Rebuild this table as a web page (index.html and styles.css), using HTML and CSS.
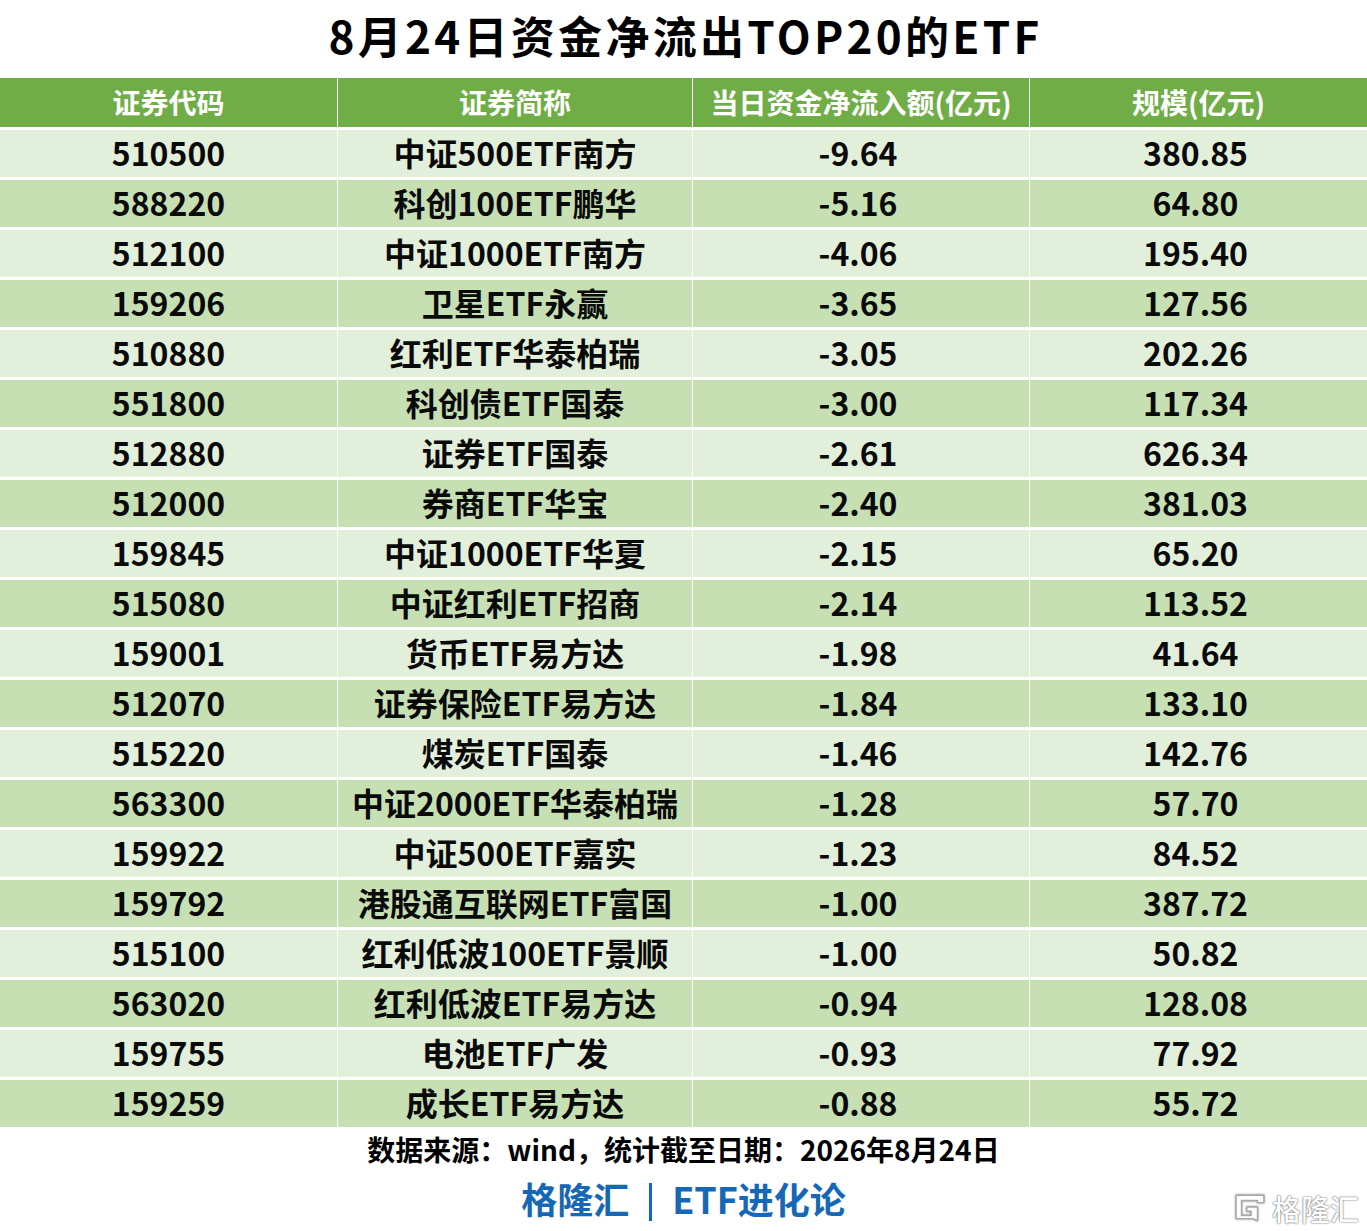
FILE: index.html
```html
<!DOCTYPE html>
<html lang="zh-CN">
<head>
<meta charset="utf-8">
<title>8月24日资金净流出TOP20的ETF</title>
<link rel="stylesheet" href="styles.css">
</head>
<body>
<div class="page">
  <header class="title-bar"><h1 class="title">8月24日资金净流出TOP20的ETF</h1></header>
  <div class="table">
    <div class="th">证券代码</div><div class="th">证券简称</div><div class="th">当日资金净流入额(亿元)</div><div class="th">规模(亿元)</div>
    <div class="td l">510500</div><div class="td l">中证500ETF南方</div><div class="td l n">-9.64</div><div class="td l n">380.85</div>
    <div class="td d">588220</div><div class="td d">科创100ETF鹏华</div><div class="td d n">-5.16</div><div class="td d n">64.80</div>
    <div class="td l">512100</div><div class="td l">中证1000ETF南方</div><div class="td l n">-4.06</div><div class="td l n">195.40</div>
    <div class="td d">159206</div><div class="td d">卫星ETF永赢</div><div class="td d n">-3.65</div><div class="td d n">127.56</div>
    <div class="td l">510880</div><div class="td l">红利ETF华泰柏瑞</div><div class="td l n">-3.05</div><div class="td l n">202.26</div>
    <div class="td d">551800</div><div class="td d">科创债ETF国泰</div><div class="td d n">-3.00</div><div class="td d n">117.34</div>
    <div class="td l">512880</div><div class="td l">证券ETF国泰</div><div class="td l n">-2.61</div><div class="td l n">626.34</div>
    <div class="td d">512000</div><div class="td d">券商ETF华宝</div><div class="td d n">-2.40</div><div class="td d n">381.03</div>
    <div class="td l">159845</div><div class="td l">中证1000ETF华夏</div><div class="td l n">-2.15</div><div class="td l n">65.20</div>
    <div class="td d">515080</div><div class="td d">中证红利ETF招商</div><div class="td d n">-2.14</div><div class="td d n">113.52</div>
    <div class="td l">159001</div><div class="td l">货币ETF易方达</div><div class="td l n">-1.98</div><div class="td l n">41.64</div>
    <div class="td d">512070</div><div class="td d">证券保险ETF易方达</div><div class="td d n">-1.84</div><div class="td d n">133.10</div>
    <div class="td l">515220</div><div class="td l">煤炭ETF国泰</div><div class="td l n">-1.46</div><div class="td l n">142.76</div>
    <div class="td d">563300</div><div class="td d">中证2000ETF华泰柏瑞</div><div class="td d n">-1.28</div><div class="td d n">57.70</div>
    <div class="td l">159922</div><div class="td l">中证500ETF嘉实</div><div class="td l n">-1.23</div><div class="td l n">84.52</div>
    <div class="td d">159792</div><div class="td d">港股通互联网ETF富国</div><div class="td d n">-1.00</div><div class="td d n">387.72</div>
    <div class="td l">515100</div><div class="td l">红利低波100ETF景顺</div><div class="td l n">-1.00</div><div class="td l n">50.82</div>
    <div class="td d">563020</div><div class="td d">红利低波ETF易方达</div><div class="td d n">-0.94</div><div class="td d n">128.08</div>
    <div class="td l">159755</div><div class="td l">电池ETF广发</div><div class="td l n">-0.93</div><div class="td l n">77.92</div>
    <div class="td d">159259</div><div class="td d">成长ETF易方达</div><div class="td d n">-0.88</div><div class="td d n">55.72</div>
  </div>
  <p class="source">数据来源：wind，统计截至日期：2026年8月24日</p>
  <p class="brand">格隆汇<span class="bar"></span>ETF进化论</p>
  <div class="watermark">
    <svg class="wm-logo" viewBox="0 0 30 28" width="32" height="30">
      <path d="M2 2 H28 V9 H22 V7 H7 V21 H16 V17 H12 V13 H22 V26 L18 24 H2 Z" fill="#ffffff" stroke="#a8a8a8" stroke-width="1.3" stroke-linejoin="round"/>
    </svg>
    <span class="wm-text">格隆汇</span>
  </div>
</div>
</body>
</html>
```

FILE: styles.css
```css
html, body {
  margin: 0;
  padding: 0;
  background: #ffffff;
}
body {
  font-family: "Noto Sans CJK SC", "Noto Sans", sans-serif;
  color: #000;
}
.page {
  position: relative;
  width: 1367px;
  height: 1231px;
  overflow: hidden;
}
.title-bar {
  height: 78px;
  box-sizing: border-box;
  padding-bottom: 9px;
  display: flex;
  align-items: center;
  justify-content: center;
}
.title {
  margin: 0;
  font-size: 44px;
  font-weight: 700;
  letter-spacing: 3.3px;
  line-height: 1;
  padding-left: 4px;
}
.table {
  display: grid;
  grid-template-columns: 337px 354px 336px 337px;
  grid-template-rows: 49px;
  grid-auto-rows: 47px;
  column-gap: 1px;
  row-gap: 3px;
  background: #ffffff;
}
.th, .td {
  display: flex;
  align-items: center;
  justify-content: center;
  font-weight: 700;
  white-space: nowrap;
  box-sizing: border-box;
}
.th {
  background: #70ad47;
  color: #ffffff;
  font-size: 28px;
  padding-bottom: 2px;
}
.td {
  font-size: 32px;
  color: #0a0a0a;
  padding-bottom: 3px;
}
.td.n { padding-right: 6px; }
.td.l { background: #e2efda; }
.td.d { background: #c6e0b4; }
.source {
  margin: 0;
  height: 46px;
  box-sizing: border-box;
  padding-bottom: 2px;
  display: flex;
  align-items: center;
  justify-content: center;
  font-size: 28px;
  font-weight: 700;
}
.brand {
  margin: 0;
  height: 54px;
  box-sizing: border-box;
  padding-bottom: 4px;
  display: flex;
  align-items: center;
  justify-content: center;
  font-size: 36px;
  font-weight: 700;
  color: #1667b5;
}
.bar {
  display: inline-block;
  width: 3px;
  height: 38px;
  background: #1667b5;
  margin: 8px 20px 0 20px;
}
.watermark {
  position: absolute;
  right: 8px;
  bottom: 8px;
  display: flex;
  align-items: center;
  gap: 6px;
}
.wm-logo {
  filter: drop-shadow(0 0 1px rgba(0,0,0,0.45));
}
.wm-text {
  font-size: 29px;
  font-weight: 500;
  color: #ffffff;
  text-shadow: 0 0 2px rgba(0,0,0,0.55), 0 0 1px rgba(0,0,0,0.5);
  line-height: 1;
}
```
